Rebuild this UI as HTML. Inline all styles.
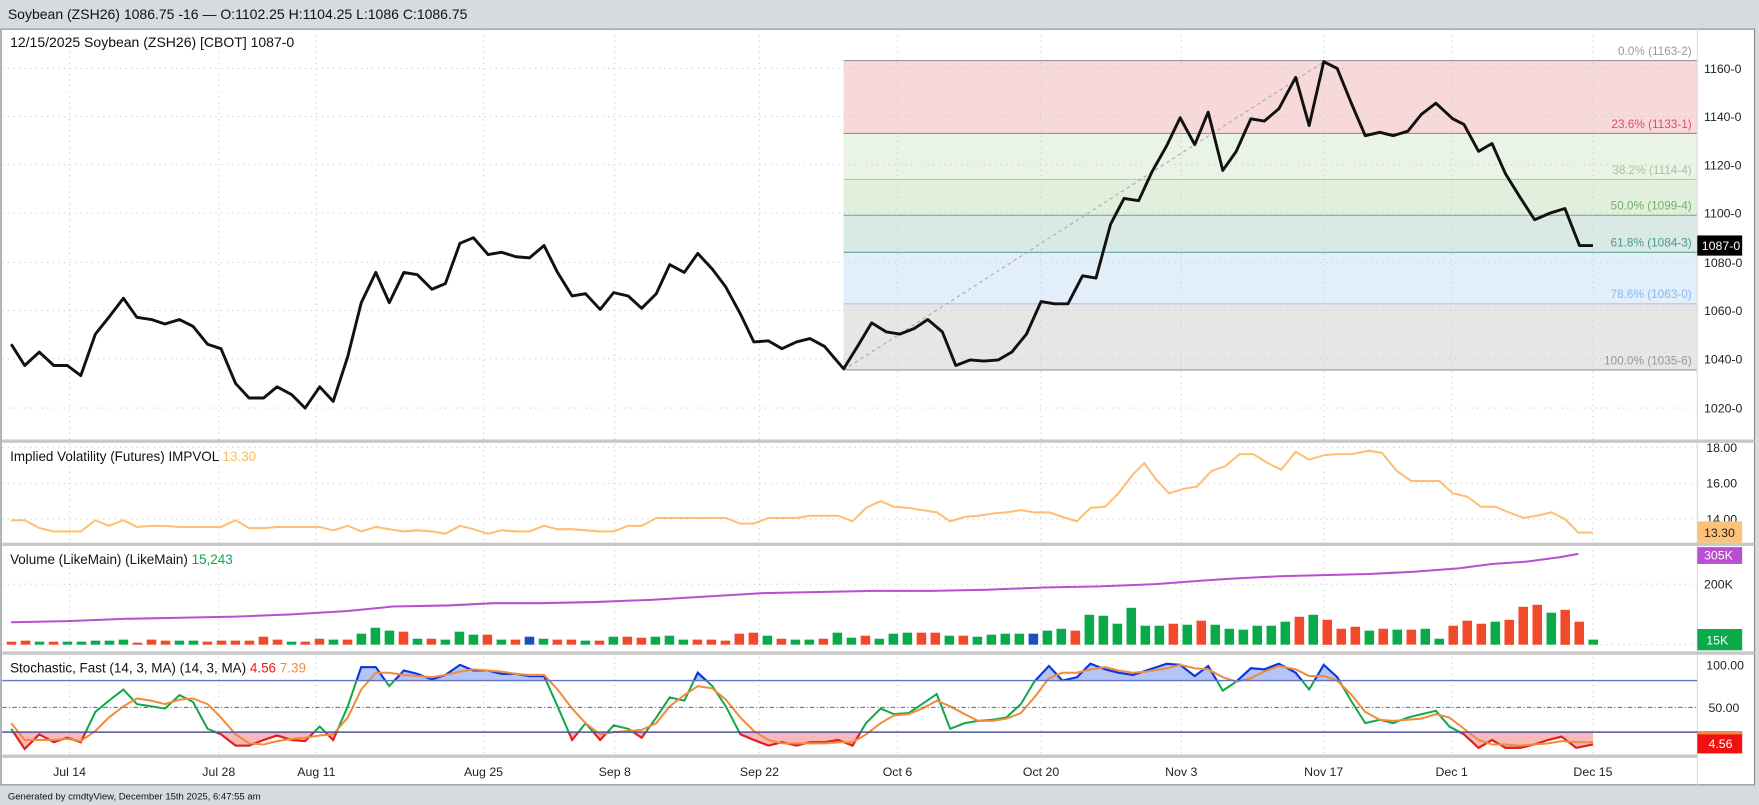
<!DOCTYPE html>
<html><head><meta charset="utf-8"><style>
html,body{margin:0;padding:0;background:#d8dbde;}
svg{display:block;font-family:"Liberation Sans",sans-serif;}
</style></head><body>
<svg id="s" width="1759" height="805" viewBox="0 0 1568 718" preserveAspectRatio="none" xmlns="http://www.w3.org/2000/svg">
<rect x="0" y="0" width="1568" height="718" fill="#d8dbde"/>
<text x="7" y="17" font-size="12.5" fill="#111">Soybean (ZSH26) 1086.75 -16 — O:1102.25 H:1104.25 L:1086 C:1086.75</text>
<rect x="1" y="26" width="1563" height="674" fill="#fff" stroke="#888" stroke-width="1"/>
<!-- fib zones -->
<rect x="752" y="54" width="761" height="65" fill="#f7d9d9"/>
<rect x="752" y="119" width="761" height="41" fill="#e9f3e6"/>
<rect x="752" y="160" width="761" height="32" fill="#e1efdc"/>
<rect x="752" y="192" width="761" height="33" fill="#d9eae6"/>
<rect x="752" y="225" width="761" height="46" fill="#e3eefb"/>
<rect x="752" y="271" width="761" height="59" fill="#e6e6e6"/>
<g stroke-width="1">
<line x1="752" y1="54" x2="1513" y2="54" stroke="#999"/>
<line x1="752" y1="119" x2="1513" y2="119" stroke="#e07078"/>
<line x1="752" y1="160" x2="1513" y2="160" stroke="#a8d8a0"/>
<line x1="752" y1="192" x2="1513" y2="192" stroke="#78b870"/>
<line x1="752" y1="225" x2="1513" y2="225" stroke="#60a898"/>
<line x1="752" y1="271" x2="1513" y2="271" stroke="#a8c8f0"/>
<line x1="752" y1="330" x2="1513" y2="330" stroke="#999"/>
</g>
<!-- grid -->
<g stroke="#ccc" stroke-dasharray="1,4" stroke-width="1">
<line x1="2" y1="61" x2="1513" y2="61"/><line x1="2" y1="104" x2="1513" y2="104"/><line x1="2" y1="147" x2="1513" y2="147"/><line x1="2" y1="190" x2="1513" y2="190"/><line x1="2" y1="234" x2="1513" y2="234"/><line x1="2" y1="277" x2="1513" y2="277"/><line x1="2" y1="320" x2="1513" y2="320"/><line x1="2" y1="364" x2="1513" y2="364"/>
<line x1="2" y1="399" x2="1513" y2="399"/><line x1="2" y1="431" x2="1513" y2="431"/><line x1="2" y1="463" x2="1513" y2="463"/>
<line x1="2" y1="521" x2="1513" y2="521"/><line x1="2" y1="575" x2="1513" y2="575"/>
<line x1="62" y1="26" x2="62" y2="675"/><line x1="195" y1="26" x2="195" y2="675"/><line x1="282" y1="26" x2="282" y2="675"/><line x1="431" y1="26" x2="431" y2="675"/><line x1="548" y1="26" x2="548" y2="675"/><line x1="677" y1="26" x2="677" y2="675"/><line x1="800" y1="26" x2="800" y2="675"/><line x1="928" y1="26" x2="928" y2="675"/><line x1="1053" y1="26" x2="1053" y2="675"/><line x1="1180" y1="26" x2="1180" y2="675"/><line x1="1294" y1="26" x2="1294" y2="675"/><line x1="1420" y1="26" x2="1420" y2="675"/>
</g>
<line x1="752" y1="330" x2="1182" y2="54" stroke="#aaa" stroke-dasharray="3,3" stroke-width="1"/>
<g font-size="10.5" text-anchor="end">
<text x="1508" y="49" fill="#999">0.0% (1163-2)</text>
<text x="1508" y="114" fill="#e05060">23.6% (1133-1)</text>
<text x="1508" y="155" fill="#9ccc94">38.2% (1114-4)</text>
<text x="1508" y="187" fill="#70b068">50.0% (1099-4)</text>
<text x="1508" y="220" fill="#4a9a88">61.8% (1084-3)</text>
<text x="1508" y="266" fill="#8ab8ec">78.6% (1063-0)</text>
<text x="1508" y="325" fill="#999">100.0% (1035-6)</text>
</g>
<text x="9" y="42" font-size="12.5" fill="#111">12/15/2025 Soybean (ZSH26) [CBOT] 1087-0</text>
<polyline fill="none" stroke="#111" stroke-width="2.6" stroke-linejoin="round" points="10,307 22,326 35,314 48,326 60,326 72,335 85,298 97,283 110,266 122,283 135,285 147,289 160,285 172,291 185,307 197,311 210,342 222,355 235,355 247,345 260,352 272,364 285,345 297,358 310,318 322,270 335,243 347,270 360,243 372,245 385,258 397,253 410,217 422,212 435,227 447,225 460,229 472,230 485,219 497,243 510,264 522,262 535,276 547,261 560,264 572,275 585,262 597,236 610,243 622,226 635,240 647,256 660,280 672,305 685,304 697,311 710,305 722,302 735,309 752,329 765,308 777,288 790,296 802,298 815,293 827,285 840,296 852,326 865,321 877,322 890,321 902,314 915,298 928,269 940,271 952,271 965,246 977,248 990,200 1002,177 1015,179 1027,153 1040,130 1052,105 1065,129 1077,100 1090,152 1102,135 1115,106 1127,108 1140,97 1155,69 1167,112 1180,55 1192,61 1205,93 1217,121 1230,118 1242,121 1255,117 1267,102 1280,92 1295,106 1305,111 1318,135 1330,128 1342,155 1355,176 1368,196 1382,190 1395,186 1408,219 1420,219"/>
<!-- price axis -->
<line x1="1513" y1="26" x2="1513" y2="700" stroke="#ddd"/>
<g font-size="11" fill="#222">
<text x="1519" y="65">1160-0</text><text x="1519" y="108">1140-0</text><text x="1519" y="151">1120-0</text><text x="1519" y="194">1100-0</text><text x="1519" y="238">1080-0</text><text x="1519" y="281">1060-0</text><text x="1519" y="324">1040-0</text><text x="1519" y="368">1020-0</text>
</g>
<rect x="1513" y="210" width="40" height="18" fill="#000"/>
<text x="1517" y="223" font-size="11" fill="#fff">1087-0</text>
<!-- separators -->
<g fill="#c8c8c8"><rect x="2" y="392" width="1562" height="3"/><rect x="2" y="484" width="1562" height="3"/><rect x="2" y="581" width="1562" height="3"/><rect x="2" y="673" width="1511" height="3"/></g>
<!-- IV -->
<text x="9" y="411" font-size="12" fill="#111">Implied Volatility (Futures)  IMPVOL <tspan fill="#fbb862">13.30</tspan></text>
<polyline fill="none" stroke="#fdbf72" stroke-width="1.8" points="10,464 22,464 35,471 48,474 60,474 72,474 85,464 97,469 110,464 122,470 135,469 147,469 160,470 172,470 185,470 197,470 210,464 222,471 235,471 247,470 260,470 272,470 285,470 297,473 310,469 322,474 335,470 347,472 360,474 372,473 385,474 397,476 410,469 422,472 435,476 447,473 460,474 472,474 485,469 497,472 510,472 522,473 535,474 547,474 560,469 572,469 585,462 597,462 610,462 622,462 635,462 647,462 660,467 672,467 685,462 697,462 710,462 722,460 735,460 747,460 760,465 772,453 785,447 797,452 810,453 822,455 835,457 847,465 860,461 872,460 885,458 897,457 910,455 922,457 935,457 947,461 960,465 972,453 985,452 997,440 1010,423 1020,413 1030,427 1042,440 1055,436 1067,434 1080,420 1092,416 1105,405 1117,405 1130,413 1142,419 1155,403 1167,410 1180,406 1192,405 1205,405 1220,402 1232,404 1245,420 1258,429 1270,429 1283,429 1295,440 1308,443 1320,452 1333,452 1345,457 1358,462 1370,460 1383,457 1395,463 1407,475 1420,475"/>
<g font-size="11" fill="#222"><text x="1521" y="403">18.00</text><text x="1521" y="435">16.00</text><text x="1521" y="467">14.00</text></g>
<rect x="1513" y="465" width="40" height="19" fill="#fdc27a"/>
<text x="1519" y="479" font-size="11" fill="#222">13.30</text>
<!-- Volume -->
<text x="9" y="503" font-size="12" fill="#111">Volume (LikeMain)  (LikeMain) <tspan fill="#0aaa4a">15,243</tspan></text>
<g id="bars"></g>
<polyline fill="none" stroke="#b84fcf" stroke-width="1.8" points="10,555 60,554 110,552 160,551 210,550 260,548 310,545 350,541 400,540 440,538 480,538 530,537 580,535 630,532 680,529 730,528 780,527 830,527 880,526 930,524 980,523 1030,521 1070,518 1100,516 1140,514 1180,513 1220,512 1260,510 1300,507 1330,503 1360,501 1390,497 1407,494"/>
<rect x="1513" y="488" width="40" height="15" fill="#b84fcf"/>
<text x="1519" y="499" font-size="11" fill="#fff">305K</text>
<text x="1519" y="525" font-size="11" fill="#222">200K</text>
<rect x="1513" y="561" width="40" height="19" fill="#0aaa4a"/>
<text x="1521" y="575" font-size="11" fill="#fff">15K</text>
<!-- Stochastic -->
<defs>
<clipPath id="ca"><rect x="0" y="0" width="1513" height="607"/></clipPath>
<clipPath id="cb"><rect x="0" y="653" width="1513" height="30"/></clipPath>
</defs>
<g id="stoch"></g>
<line x1="2" y1="607" x2="1513" y2="607" stroke="#6470c0" stroke-width="1.3"/>
<line x1="2" y1="631" x2="1513" y2="631" stroke="#6470c0" stroke-width="1" stroke-dasharray="4,2,1,2"/>
<line x1="2" y1="653" x2="1513" y2="653" stroke="#5050a0" stroke-width="1.3"/>
<text x="9" y="600" font-size="12" fill="#111">Stochastic, Fast (14, 3, MA) (14, 3, MA) <tspan fill="#f01818">4.56</tspan> <tspan fill="#f08c3c">7.39</tspan></text>
<g font-size="11" fill="#222"><text x="1521" y="597">100.00</text><text x="1523" y="635">50.00</text></g>
<rect x="1513" y="652" width="40" height="20" fill="#f01010"/>
<rect x="1513" y="652" width="40" height="3" fill="#f08c3c"/>
<text x="1523" y="667" font-size="11" fill="#fff">4.56</text>
<!-- x labels -->
<g font-size="11" fill="#222" text-anchor="middle">
<text x="62" y="692">Jul 14</text><text x="195" y="692">Jul 28</text><text x="282" y="692">Aug 11</text><text x="431" y="692">Aug 25</text><text x="548" y="692">Sep 8</text><text x="677" y="692">Sep 22</text><text x="800" y="692">Oct 6</text><text x="928" y="692">Oct 20</text><text x="1053" y="692">Nov 3</text><text x="1180" y="692">Nov 17</text><text x="1294" y="692">Dec 1</text><text x="1420" y="692">Dec 15</text>
</g>
<rect x="0" y="701" width="1568" height="17" fill="#d8dbde"/>
<text x="7" y="713" font-size="8.5" fill="#111">Generated by cmdtyView, December 15th 2025, 6:47:55 am</text>
</svg>
<script>
var NS="http://www.w3.org/2000/svg";
var b="r3 r4 g3 r3 g3 g3 g4 g4 g5 r2 r5 r4 g4 g4 r3 r4 r4 r4 r8 r5 g3 r3 r6 g5 r5 g11 g17 g14 r13 g6 r6 g5 g13 g10 r10 g5 r5 b8 g6 r5 r5 g4 r4 g8 r8 r7 g8 g9 g5 r5 r5 r4 r11 r12 g9 r6 g5 g5 r6 g12 g7 r9 g6 g11 g12 r12 r12 g9 r9 g8 g10 g11 g11 b11 g14 g16 r14 g30 g29 g21 g37 g19 g19 r21 g20 r24 g20 g16 g15 g19 g19 g23 r28 g30 r25 r16 r18 g14 r16 g15 r15 g16 g6 r19 r24 r21 g23 r25 r38 r40 g32 r35 r23 g5".split(" ");
var col={r:"#f04a2a",g:"#0aaa4a",b:"#1a4fc0"},G=document.getElementById("bars");
var step=(1420-10)/(b.length-1);
b.forEach(function(s,i){var h=parseFloat(s.slice(1))*0.89;var r=document.createElementNS(NS,"rect");r.setAttribute("x",(10+i*step-4).toFixed(1));r.setAttribute("y",(575-h).toFixed(1));r.setAttribute("width","8.5");r.setAttribute("height",h.toFixed(1));r.setAttribute("fill",col[s[0]]);G.appendChild(r);});
var K="10,650 22,668 35,655 48,662 60,658 72,662 85,635 97,625 110,615 122,628 135,630 147,632 160,620 172,626 185,650 197,655 210,665 222,665 235,660 247,656 260,660 272,661 285,648 297,660 310,630 322,595 335,595 347,612 360,598 372,601 385,606 397,602 410,593 422,598 435,598 447,601 460,601 472,603 485,603 497,630 510,660 522,645 535,660 547,647 560,650 572,658 585,640 597,622 610,625 622,600 635,612 647,630 660,655 672,660 685,665 697,662 710,665 722,662 735,662 747,660 760,665 772,645 785,632 797,637 810,636 822,628 835,619 847,650 860,645 872,643 885,642 897,640 910,628 922,608 935,594 947,607 960,604 972,592 985,597 997,600 1010,602 1022,598 1040,592 1052,593 1065,603 1077,594 1090,616 1102,608 1115,596 1127,597 1140,592 1155,600 1167,615 1180,593 1192,604 1205,626 1217,645 1230,642 1242,645 1255,640 1267,637 1280,634 1292,648 1305,655 1318,667 1330,660 1342,667 1355,667 1368,664 1380,660 1392,657 1405,667 1420,664";
var D="10,645 22,660 35,660 48,660 60,659 72,661 85,652 97,640 110,630 122,623 135,625 147,628 160,624 172,623 185,628 197,640 210,655 222,663 235,664 247,661 260,659 272,658 285,656 297,655 310,640 322,615 335,600 347,600 360,602 372,603 385,604 397,602 410,599 422,597 435,598 447,599 460,601 472,602 485,602 497,615 510,632 522,645 535,655 547,653 560,652 572,651 585,645 597,630 610,620 622,612 635,614 647,624 660,640 672,652 685,660 697,663 710,663 722,663 735,663 747,662 760,662 772,655 785,645 797,638 810,637 822,632 835,625 847,630 860,637 872,643 885,643 897,641 910,636 922,622 935,605 947,600 960,600 972,597 985,595 997,598 1010,600 1022,599 1040,596 1052,593 1065,596 1077,597 1090,604 1102,608 1115,605 1127,599 1140,594 1155,597 1167,603 1180,603 1192,607 1205,620 1217,635 1230,642 1242,643 1255,642 1267,641 1280,637 1292,640 1305,650 1318,660 1330,664 1342,664 1355,665 1368,664 1380,663 1392,661 1405,662 1420,662";
var S=document.getElementById("stoch");
S.innerHTML='<polygon points="10,607 '+K+' 1420,607" fill="#b4c4f4" clip-path="url(#ca)"/>'+
'<polygon points="10,653 '+K+' 1420,653" fill="#f8b8bc" clip-path="url(#cb)"/>'+
'<polyline points="'+K+'" fill="none" stroke="#10a848" stroke-width="1.8"/>'+
'<polyline points="'+K+'" fill="none" stroke="#1030f0" stroke-width="1.8" clip-path="url(#ca)"/>'+
'<polyline points="'+K+'" fill="none" stroke="#f01818" stroke-width="1.8" clip-path="url(#cb)"/>'+
'<polyline points="'+D+'" fill="none" stroke="#f08c3c" stroke-width="1.8"/>';
</script>
</body></html>
